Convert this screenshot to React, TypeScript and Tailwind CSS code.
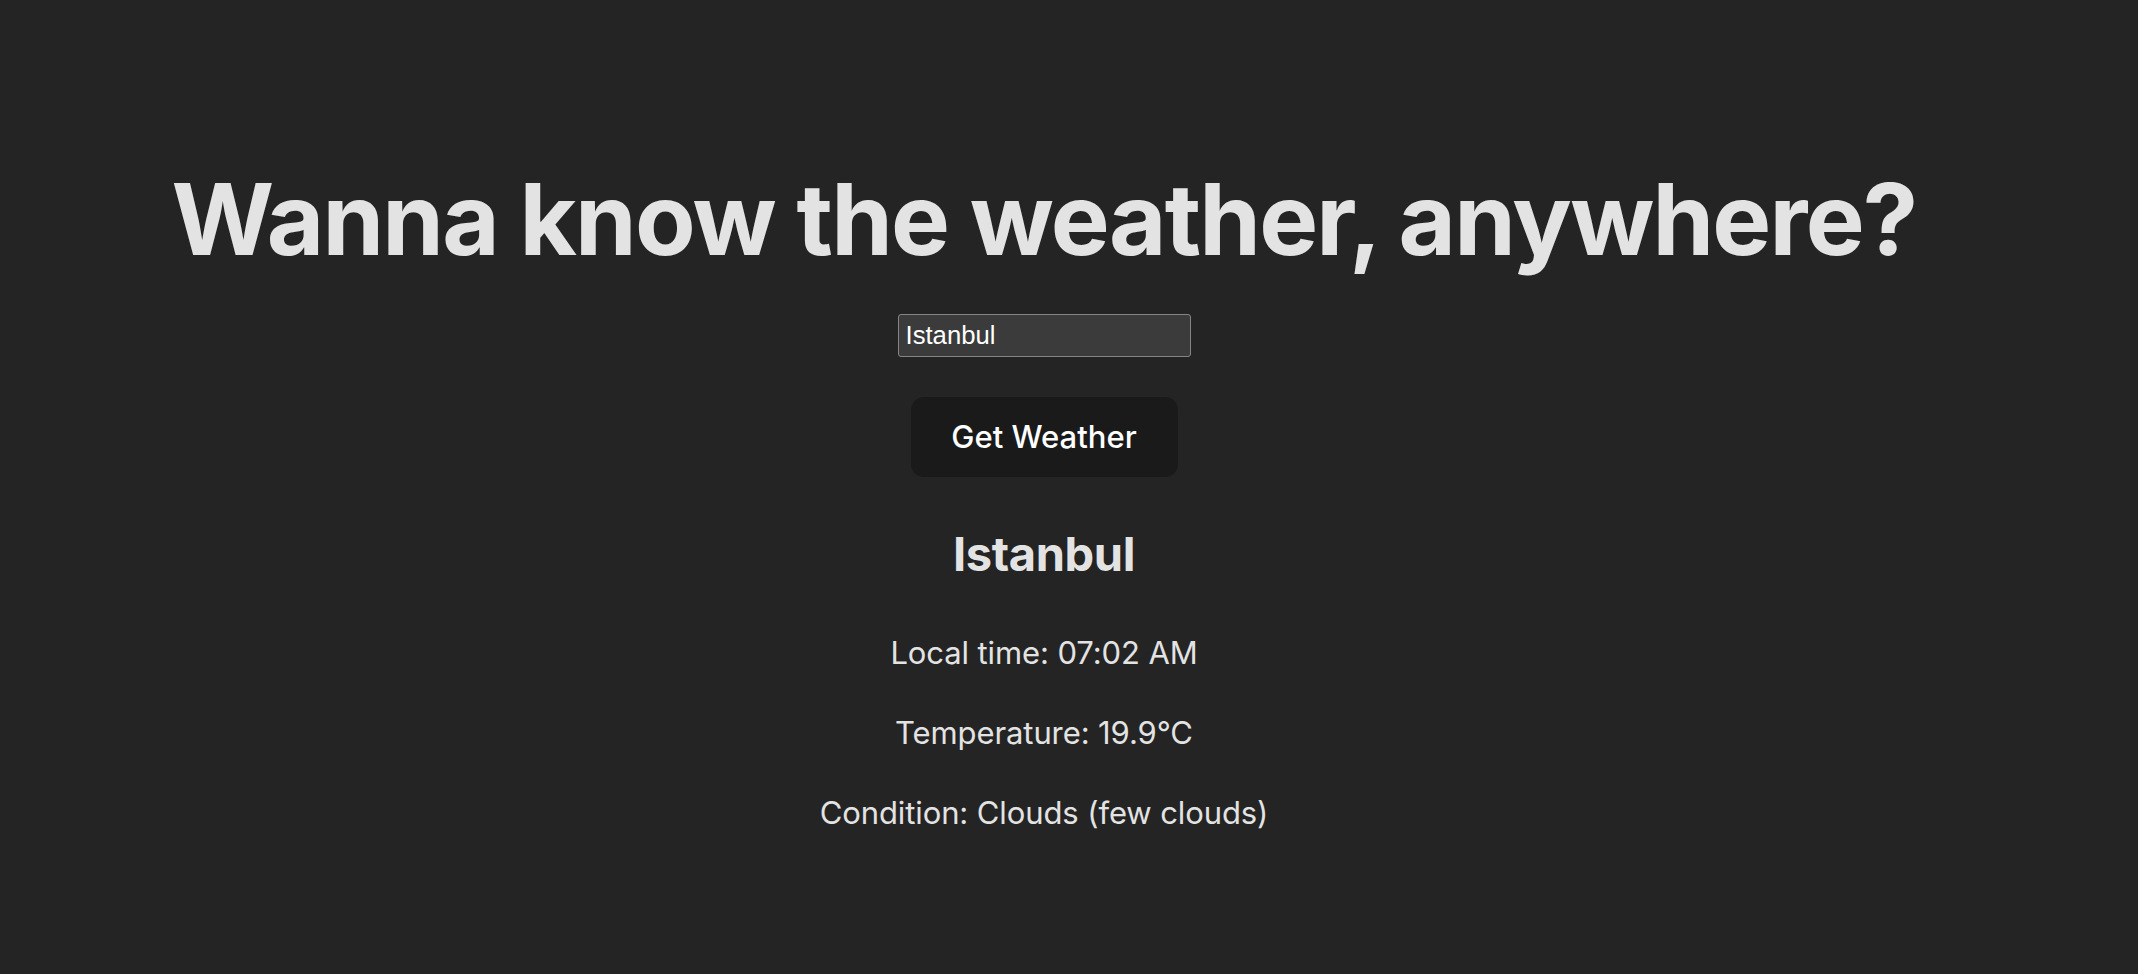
const App = () => {
  return (
    <div className="min-h-screen w-full bg-[#242424] text-[#e3e3e3] font-['Inter',sans-serif]">
      <div className="flex flex-col items-center pr-[50px] pt-[170px]">
        <h1 className="text-[99px] leading-[99px] font-bold tracking-[-1.8px] whitespace-nowrap">
          Wanna know the weather, anywhere?
        </h1>
        <input
          defaultValue="Istanbul"
          className="mt-[45px] w-[293px] h-[43px] px-[7px] bg-[#3b3b3b] text-white border border-[#858585] rounded-[3px] text-[25.7px] font-['Liberation_Sans',sans-serif] outline-none"
        />
        <button className="mt-[40px] w-[267px] h-[80px] rounded-[13px] bg-[#1a1a1a] text-white text-[31px] font-medium">
          Get Weather
        </button>
        <h2 className="mt-[53px] text-[47px] leading-[47px] font-bold tracking-[-0.4px]">Istanbul</h2>
        <p className="mt-[60px] text-[31px] leading-[31px] tracking-[-0.1px]">Local time: 07:02 AM</p>
        <p className="mt-[49px] text-[31px] leading-[31px] tracking-[-0.1px]">Temperature: 19.9°C</p>
        <p className="mt-[49px] text-[31px] leading-[31px] tracking-[-0.1px]">Condition: Clouds (few clouds)</p>
      </div>
    </div>
  )
}

export default App
